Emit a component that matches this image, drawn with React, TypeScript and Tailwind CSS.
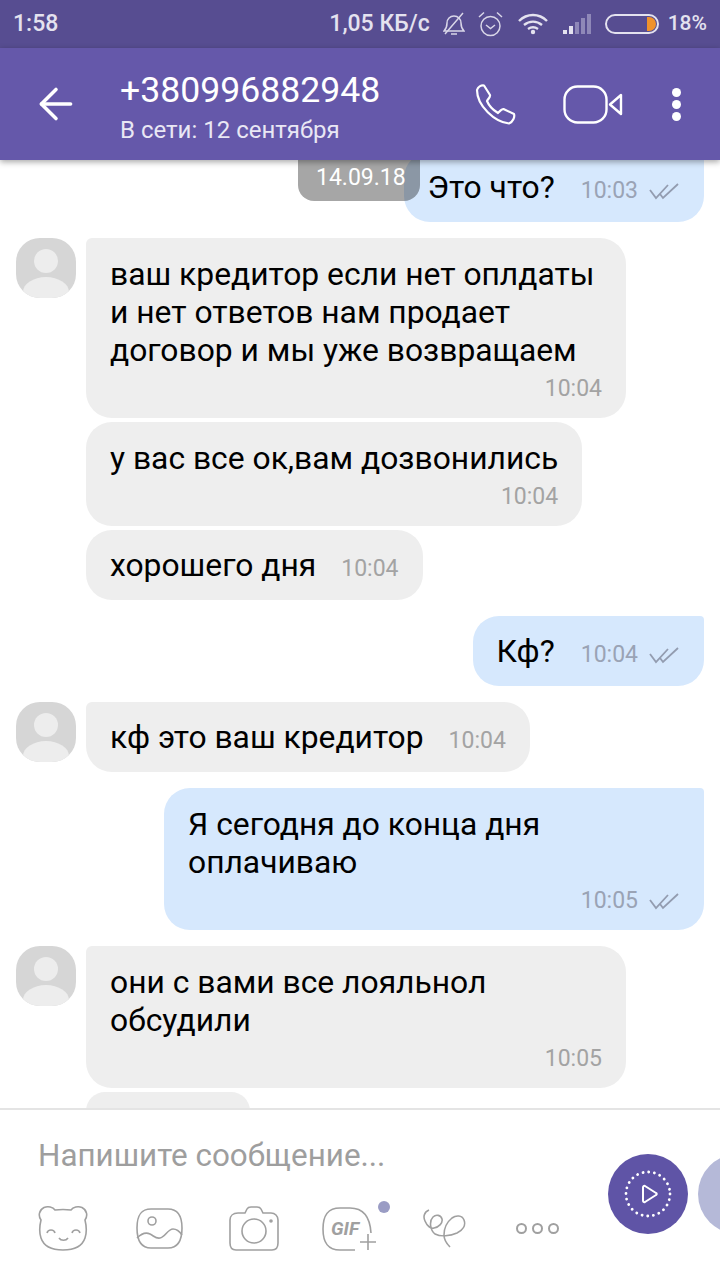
import { ArrowLeft } from "lucide-react";

const font = { fontFamily: "Roboto, sans-serif" };

const Checks = () => (
  <svg width="32" height="18" viewBox="0 0 32 18" fill="none" stroke="#939cb0" strokeWidth="1.8" className="ml-[10px] shrink-0">
    <path d="M2 8l6 8L20 3" />
    <path d="M12 12l3 4L30 2" />
  </svg>
);

const Avatar = () => (
  <div className="relative w-[60px] h-[60px] shrink-0 overflow-hidden rounded-[24px] bg-[#d6d6d6]">
    <div className="absolute left-[18px] top-[11px] w-[24px] h-[24px] rounded-full bg-[#ededed]" />
    <div className="absolute left-[7px] top-[39px] w-[46px] h-[30px] rounded-[50%] bg-[#ededed]" />
  </div>
);

const Incoming = ({ lines, time, inline, avatar, className }: { lines: string[]; time: string; inline?: boolean; avatar?: boolean; className?: string }) => (
  <div className="flex pl-[16px] gap-[10px]">
    <div className="w-[60px] shrink-0">{avatar && <Avatar />}</div>
    <div className={`rounded-[26px] ${avatar ? "rounded-tl-[6px]" : ""} bg-[#eeeeee] px-[24px] ${className ?? ""}`}>
      {inline ? (
        <div className="flex items-center h-[70px]">
          <span className="text-[31.8px] leading-[38px] text-black">{lines[0]}</span>
          <span className="ml-[25px] mt-[8px] text-[23px] text-[#a3a3a3]">{time}</span>
        </div>
      ) : (
        <div className="pt-[17px] pb-[15px]">
          {lines.map((l) => (
            <div key={l} className="text-[31.8px] leading-[38px] text-black whitespace-nowrap">{l}</div>
          ))}
          <div className="text-right text-[23px] leading-[28px] mt-[6px] text-[#a3a3a3]">{time}</div>
        </div>
      )}
    </div>
  </div>
);

const Outgoing = ({ lines, time, inline, className }: { lines: string[]; time: string; inline?: boolean; className?: string }) => (
  <div className="flex justify-end pr-[16px]">
    <div className={`rounded-[26px] rounded-tr-[4px] bg-[#d6e8fd] px-[24px] ${className ?? ""}`}>
      {inline ? (
        <div className="flex items-center h-[70px]">
          <span className="text-[31.8px] leading-[38px] text-black">{lines[0]}</span>
          <span className="ml-[26px] mt-[8px] text-[23px] text-[#9aa3b5]">{time}</span>
          <div className="mt-[8px]">
            <Checks />
          </div>
        </div>
      ) : (
        <div className="pt-[17px] pb-[15px]">
          {lines.map((l) => (
            <div key={l} className="text-[31.8px] leading-[38px] text-black whitespace-nowrap">{l}</div>
          ))}
          <div className="flex justify-end items-center mt-[6px] h-[28px] text-[23px] text-[#9aa3b5]">
            {time}
            <Checks />
          </div>
        </div>
      )}
    </div>
  </div>
);

export default function App() {
  return (
    <div className="relative flex flex-col w-[720px] h-[1280px] overflow-hidden bg-white" style={font}>
      {/* Status bar */}
      <div className="flex items-center h-[48px] shrink-0 bg-[#574d91] pl-[13px] pr-[13px] text-[#e4e2ef] text-[23px] font-medium">
        <span>1:58</span>
        <span className="ml-auto">1,05 КБ/с</span>
        <svg width="22" height="24" viewBox="0 0 22 24" fill="none" stroke="#d9d6e8" strokeWidth="1.5" className="ml-[13px]">
          <path d="M1 19c2-2 3-4 3-8 0-4 3-7 7-7s7 3 7 7c0 4 1 6 3 8H1z" />
          <path d="M8 22h6M2 22L20 1" />
        </svg>
        <svg width="25" height="26" viewBox="0 0 25 26" fill="none" stroke="#d9d6e8" strokeWidth="1.5" className="ml-[13px]">
          <circle cx="12.5" cy="15" r="9.500" />
          <path d="M8 14l4.500 3.500L17 14M1 6l5-4.500M24 6l-5-4.500" />
        </svg>
        <svg width="31" height="22" viewBox="0 0 31 22" fill="none" stroke="#e4e2ef" strokeWidth="2.4" className="ml-[15px]">
          <path d="M1 8c8-8 20-8 28 0M6 12c5.500-4.500 12.500-4.500 18 0M10 16c3-2 7-2 10 0" />
          <circle cx="15" cy="19" r="2.200" fill="#e4e2ef" stroke="none" />
        </svg>
        <svg width="31" height="24" viewBox="0 0 31 24" className="ml-[13px]">
          <rect x="1" y="18" width="4" height="4" fill="#e4e2ef" />
          <rect x="7" y="14" width="4" height="8" fill="#e4e2ef" />
          <rect x="13" y="10" width="4" height="12" fill="#8f88b8" />
          <rect x="19" y="6" width="4" height="16" fill="#8f88b8" />
          <rect x="25" y="2" width="4" height="20" fill="#8f88b8" />
        </svg>
        <div className="relative ml-[12px] w-[54px] h-[20px] rounded-full border-2 border-[#e4e2ef] overflow-hidden">
          <div className="absolute right-[1px] top-[1px] bottom-[1px] w-[9px] bg-[#f0922b] rounded-r-full" />
        </div>
        <span className="ml-[9px] text-[21px]">18%</span>
      </div>

      {/* Header */}
      <div className="relative z-10 flex items-center h-[112px] shrink-0 bg-[#6558aa] shadow-[0_2px_6px_rgba(0,0,0,0.35)] text-white">
        <ArrowLeft size={50} strokeWidth={1.7} className="ml-[31px] shrink-0" />
        <div className="ml-[39px] flex flex-col">
          <span className="text-[35.6px] leading-[42px] mt-[5px]">+380996882948</span>
          <span className="text-[24px] leading-[30px] mt-[4px] text-[#e9e7f4]">В сети: 12 сентября</span>
        </div>
        <svg width="41" height="41" viewBox="0 0 41 41" fill="none" stroke="white" strokeWidth="2.2" strokeLinejoin="round" className="ml-auto">
          <path d="M2 6C3 3 6 1 9 1.500L15 11C15.500 13 13 15 12 17 14 22 18 26 23 29 25 27 26.500 25 28.500 25L39 30C40 33 38 38 34 39.500 20 38 2 22 2 6Z" />
        </svg>
        <svg width="60" height="39" viewBox="0 0 60 39" fill="none" stroke="white" strokeWidth="2.4" strokeLinejoin="round" className="ml-[47px]">
          <rect x="1.500" y="1.500" width="42" height="36" rx="13" />
          <path d="M58 10v19L47 19.500z" />
        </svg>
        <div className="ml-[49px] mr-[39px] flex flex-col gap-[3px]">
          <div className="w-[9px] h-[9px] rounded-full bg-white" />
          <div className="w-[9px] h-[9px] rounded-full bg-white" />
          <div className="w-[9px] h-[9px] rounded-full bg-white" />
        </div>
      </div>

      {/* Messages */}
      <div className="relative flex-1 overflow-hidden">
        <div className="relative flex flex-col -mt-[8px]">
          <Outgoing lines={["Это что?"]} time="10:03" inline />
          <div className="h-[16px]" />
          <Incoming avatar lines={["ваш кредитор если нет оплдаты", "и нет ответов нам продает", "договор и мы уже возвращаем"]} time="10:04" className="w-[540px]" />
          <div className="h-[4px]" />
          <Incoming lines={["у вас все ок,вам дозвонились"]} time="10:04" />
          <div className="h-[4px]" />
          <Incoming lines={["хорошего дня"]} time="10:04" inline />
          <div className="h-[16px]" />
          <Outgoing lines={["Кф?"]} time="10:04" inline />
          <div className="h-[16px]" />
          <Incoming avatar lines={["кф это ваш кредитор"]} time="10:04" inline />
          <div className="h-[16px]" />
          <Outgoing lines={["Я сегодня до конца дня", "оплачиваю"]} time="10:05" className="w-[540px]" />
          <div className="h-[16px]" />
          <Incoming avatar lines={["они с вами все лояльнол", "обсудили"]} time="10:05" className="w-[540px]" />
          <div className="h-[4px]" />
          <Incoming lines={[]} time="" className="w-[164px]" />
        </div>
        <div className="absolute left-[298px] top-0 w-[122px] h-[41px] rounded-b-[16px] bg-black/35 text-white text-[23px] pl-[18px] pt-[1px]">
          14.09.18
        </div>
      </div>

      {/* Composer */}
      <div className="relative flex items-start h-[172px] shrink-0 border-t-2 border-[#e4e4e4] bg-white">
        <div className="pl-[38px] flex-1 min-w-0">
          <div className="mt-[27px] text-[31.4px] leading-[38px] text-[#9e9e9e]">Напишите сообщение...</div>
          <div className="mt-[31px] flex items-start">
            <svg width="50" height="45" viewBox="0 0 50 45" fill="none" stroke="#a0a0a0" strokeWidth="1.6">
              <path d="M17 4C21 3.500 29 3.500 33 4 35 1 40 0 44 1.500 49 4 50 10 47 14 48.500 20 49 26 47 32 44 41 36 44 25 44 14 44 6 41 3 32 1 26 1.500 20 3 14 0 10 1 4 6 1.500 10 0 15 1 17 4Z" />
              <path d="M9 27c1-4 7-4 8 0M34 27c1-4 7-4 8 0M21 32c2 3 7 3 9 0" />
            </svg>
            <svg width="47" height="41" viewBox="0 0 47 41" fill="none" stroke="#a0a0a0" strokeWidth="1.6" className="ml-[48px] mt-[2px]">
              <path d="M15 1h17C42 1 46 8 46 20S42 40 32 40H15C5 40 1 33 1 20S5 1 15 1Z" />
              <circle cx="16" cy="13" r="4" />
              <path d="M1 30C5 26 10 24 14 26 18 28 20 31 24 30 29 29 32 21 37 21 41 21 44 24 46 27" />
            </svg>
            <svg width="50" height="45" viewBox="0 0 50 45" fill="none" stroke="#a0a0a0" strokeWidth="1.6" className="ml-[46px]">
              <path d="M9 7h7l2-4c1-2 2-2 4-2h6c2 0 3 0 4 2l2 4h8c4 0 7 3 7 7v23c0 4-2 7-6 7H7c-4 0-6-3-6-7V14c0-4 3-7 8-7z" />
              <circle cx="25" cy="25" r="12" />
              <circle cx="42" cy="15" r="1.800" fill="#a0a0a0" stroke="none" />
            </svg>
            <div className="relative ml-[43px] mt-[1px] w-[56px] h-[44px]">
              <svg width="56" height="44" viewBox="0 0 56 44" fill="none" stroke="#a0a0a0" strokeWidth="1.6" className="absolute left-0 top-0">
                <path d="M33 43H18C6 43 1 36 1 22S6 1 18 1H28C42 1 48 10 49 26" />
                <path d="M46 27v16M38 35h16" />
              </svg>
              <span className="absolute left-[9px] top-[10px] text-[19px] leading-[24px] font-bold italic text-[#a0a0a0]">GIF</span>
              <div className="absolute left-[56px] -top-[6px] w-[12px] h-[12px] rounded-full bg-[#9a9cc4]" />
            </div>
            <svg width="43" height="39" viewBox="0 0 43 39" fill="none" stroke="#a0a0a0" strokeWidth="1.6" className="ml-[45px] mt-[3px]">
              <path d="M6 1C1 3 0 8 2 12 4 17 8 20 11 19 16 18 20 14 19 10 18 6 13 5 10 8 6 12 7 21 12 25 18 28 27 27 34 24 40 21 43 16 41 11 39 6 33 6 29 9 24 13 21 19 21 26 21 31 24 35 27 38" />
            </svg>
            <div className="ml-[50px] mt-[17px] flex gap-[5px]">
              <div className="w-[11px] h-[11px] rounded-full border-2 border-[#a0a0a0]" />
              <div className="w-[11px] h-[11px] rounded-full border-2 border-[#a0a0a0]" />
              <div className="w-[11px] h-[11px] rounded-full border-2 border-[#a0a0a0]" />
            </div>
          </div>
        </div>
        <div className="mt-[44px] flex shrink-0 gap-[10px] -mr-[58px]">
          <div className="flex items-center justify-center w-[80px] h-[80px] rounded-full bg-[#5f54a6]">
            <svg width="50" height="50" viewBox="0 0 50 50" fill="none" stroke="white">
              <circle cx="25" cy="25" r="22" strokeWidth="2.800" strokeLinecap="round" strokeDasharray="0.1 5.66" />
              <path d="M20 18.500c0-1.500 1-2 2-1.500L33 24c1 .5 1 1.500 0 2L22 33c-1 .5-2 0-2-1.500Z" strokeWidth="2" strokeLinejoin="round" />
            </svg>
          </div>
          <div className="w-[80px] h-[80px] rounded-full bg-[#b5b9d8]" />
        </div>
      </div>
    </div>
  );
}
